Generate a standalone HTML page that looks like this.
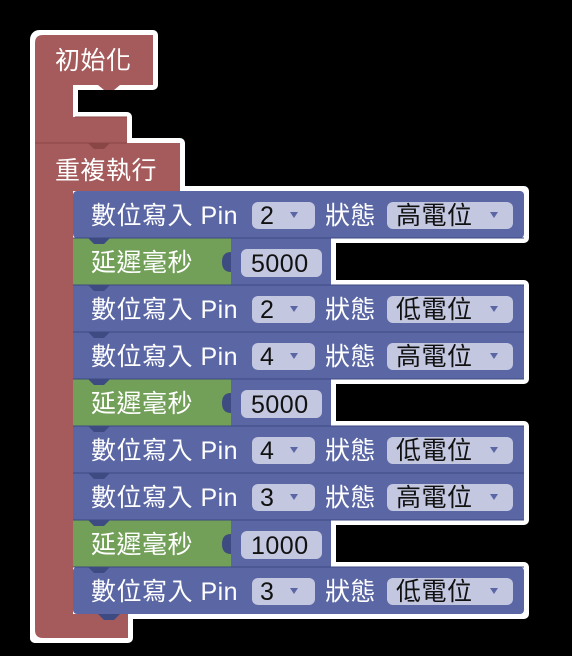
<!DOCTYPE html>
<html><head><meta charset="utf-8"><style>
html,body{margin:0;padding:0;background:#000;width:572px;height:656px;overflow:hidden}
svg{display:block}
text{font-family:"Liberation Sans","Noto Sans CJK TC",sans-serif;font-size:25px;letter-spacing:0.5px}
.w{fill:#fff}
.k{fill:#111}
</style></head><body>
<svg width="572" height="656" viewBox="0 0 572 656" xmlns="http://www.w3.org/2000/svg">
<g fill="#fff" stroke="#fff" stroke-width="10" stroke-linejoin="round">
<path d="M35 40 Q35 35 40 35 H153 V85 H73 V117 H127 V143 H35 Z"/>
<path d="M35 143 H180 V191 H35 Z"/>
<rect x="35" y="143" width="38" height="495"/>
<path d="M35 614 H128 V638 H35 Z"/>
<rect x="73" y="191" width="451" height="47"/>
<rect x="73" y="238" width="258" height="47"/>
<rect x="73" y="285" width="451" height="94"/>
<rect x="73" y="379" width="258" height="47"/>
<rect x="73" y="426" width="451" height="94"/>
<rect x="73" y="520" width="258" height="47"/>
<rect x="73" y="567" width="451" height="47"/>
</g>
<g fill="#a55b5b">
<path d="M35 43 Q35 35 43 35 H153 V85 H120 L114 90 H104 L98 85 H73 V117 H127 V143 H35 Z"/>
<path d="M35 143 H180 V191 H35 Z"/>
<path d="M35 143 H73 V614 H128 V638 H43 Q35 638 35 630 Z"/>
</g>
<path d="M35 143 H127" stroke="#8a4545" stroke-width="1"/>
<path d="M75 117 H127" stroke="#8a4545" stroke-width="1"/>
<path d="M88 143 L94 149 H104 L110 143 Z" fill="#8a4545"/>
<text x="55" y="69" class="w">初始化</text>
<text x="55" y="179" class="w">重複執行</text>
<g>
<rect x="73" y="191" width="451" height="47" rx="4" fill="#5b67a5"/>
<rect x="73" y="238" width="158" height="47" fill="#72a058"/>
<rect x="231" y="238" width="100" height="47" fill="#5b67a5"/>
<rect x="73" y="285" width="451" height="47" fill="#5b67a5"/>
<rect x="73" y="332" width="451" height="47" fill="#5b67a5"/>
<rect x="73" y="379" width="158" height="47" fill="#72a058"/>
<rect x="231" y="379" width="100" height="47" fill="#5b67a5"/>
<rect x="73" y="426" width="451" height="47" fill="#5b67a5"/>
<rect x="73" y="473" width="451" height="47" fill="#5b67a5"/>
<rect x="73" y="520" width="158" height="47" fill="#72a058"/>
<rect x="231" y="520" width="100" height="47" fill="#5b67a5"/>
<rect x="73" y="567" width="451" height="47" rx="4" fill="#5b67a5"/>
</g>
<g stroke="#3e4a82" stroke-width="1">
<line x1="73" y1="238" x2="524" y2="238"/><line x1="73" y1="285" x2="524" y2="285"/>
<line x1="73" y1="332" x2="524" y2="332"/><line x1="73" y1="379" x2="524" y2="379"/>
<line x1="73" y1="426" x2="524" y2="426"/><line x1="73" y1="473" x2="524" y2="473"/>
<line x1="73" y1="520" x2="524" y2="520"/><line x1="73" y1="567" x2="524" y2="567"/>
</g>
<g fill="#3e4a82">
<path d="M88 238 L94 244 H104 L110 238 Z"/><path d="M88 285 L94 291 H104 L110 285 Z"/>
<path d="M88 332 L94 338 H104 L110 332 Z"/><path d="M88 379 L94 385 H104 L110 379 Z"/>
<path d="M88 426 L94 432 H104 L110 426 Z"/><path d="M88 473 L94 479 H104 L110 473 Z"/>
<path d="M88 520 L94 526 H104 L110 520 Z"/><path d="M88 567 L94 573 H104 L110 567 Z"/>
<path d="M98 614 L104 620 H114 L120 614 Z"/>
<path d="M231 252 Q222 252 222 262 Q222 272 231 272 Z"/>
<path d="M231 393 Q222 393 222 403 Q222 413 231 413 Z"/>
<path d="M231 534 Q222 534 222 544 Q222 554 231 554 Z"/>
</g>
<g fill="#c3c7e0">
<rect x="252" y="202" width="63" height="27" rx="6"/><rect x="387" y="202" width="126" height="27" rx="6"/>
<rect x="241" y="249" width="81" height="28" rx="6"/>
<rect x="252" y="296" width="63" height="27" rx="6"/><rect x="387" y="296" width="126" height="27" rx="6"/>
<rect x="252" y="343" width="63" height="27" rx="6"/><rect x="387" y="343" width="126" height="27" rx="6"/>
<rect x="241" y="390" width="81" height="28" rx="6"/>
<rect x="252" y="437" width="63" height="27" rx="6"/><rect x="387" y="437" width="126" height="27" rx="6"/>
<rect x="252" y="484" width="63" height="27" rx="6"/><rect x="387" y="484" width="126" height="27" rx="6"/>
<rect x="241" y="531" width="81" height="28" rx="6"/>
<rect x="252" y="578" width="63" height="27" rx="6"/><rect x="387" y="578" width="126" height="27" rx="6"/>
</g>
<g fill="#5b67a5">
<path d="M290 212 h8 l-4 6 Z"/><path d="M490 212 h8 l-4 6 Z"/>
<path d="M290 306 h8 l-4 6 Z"/><path d="M490 306 h8 l-4 6 Z"/>
<path d="M290 353 h8 l-4 6 Z"/><path d="M490 353 h8 l-4 6 Z"/>
<path d="M290 447 h8 l-4 6 Z"/><path d="M490 447 h8 l-4 6 Z"/>
<path d="M290 494 h8 l-4 6 Z"/><path d="M490 494 h8 l-4 6 Z"/>
<path d="M290 588 h8 l-4 6 Z"/><path d="M490 588 h8 l-4 6 Z"/>
</g>
<g>
<text x="91" y="224" class="w">數位寫入 Pin</text><text x="325" y="224" class="w">狀態</text>
<text x="91" y="271" class="w">延遲毫秒</text>
<text x="91" y="318" class="w">數位寫入 Pin</text><text x="325" y="318" class="w">狀態</text>
<text x="91" y="365" class="w">數位寫入 Pin</text><text x="325" y="365" class="w">狀態</text>
<text x="91" y="412" class="w">延遲毫秒</text>
<text x="91" y="459" class="w">數位寫入 Pin</text><text x="325" y="459" class="w">狀態</text>
<text x="91" y="506" class="w">數位寫入 Pin</text><text x="325" y="506" class="w">狀態</text>
<text x="91" y="553" class="w">延遲毫秒</text>
<text x="91" y="600" class="w">數位寫入 Pin</text><text x="325" y="600" class="w">狀態</text>
</g>
<g>
<text x="260" y="224" class="k">2</text><text x="396" y="224" class="k">高電位</text>
<text x="251" y="272" class="k">5000</text>
<text x="260" y="318" class="k">2</text><text x="396" y="318" class="k">低電位</text>
<text x="260" y="365" class="k">4</text><text x="396" y="365" class="k">高電位</text>
<text x="251" y="413" class="k">5000</text>
<text x="260" y="459" class="k">4</text><text x="396" y="459" class="k">低電位</text>
<text x="260" y="506" class="k">3</text><text x="396" y="506" class="k">高電位</text>
<text x="251" y="554" class="k">1000</text>
<text x="260" y="600" class="k">3</text><text x="396" y="600" class="k">低電位</text>
</g>
</svg>
</body></html>
